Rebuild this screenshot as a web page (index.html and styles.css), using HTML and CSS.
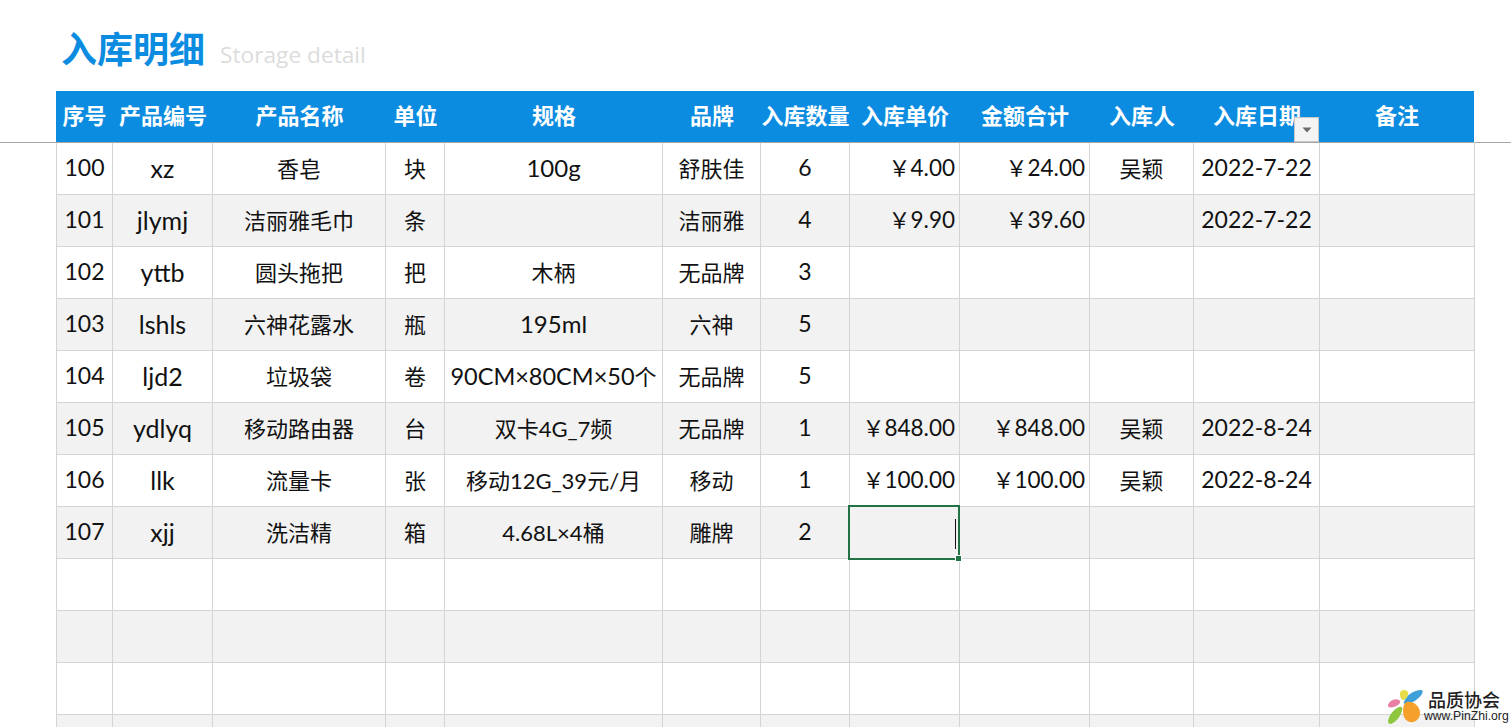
FILE: index.html
```html
<!DOCTYPE html>
<html lang="zh-CN">
<head>
<meta charset="utf-8">
<title>入库明细</title>
<link rel="stylesheet" href="styles.css">
</head>
<body>
<div class="sheet">
  <header class="title-bar">
    <h1 class="title">入库明细</h1>
    <span class="subtitle">Storage detail</span>
  </header>
  <div class="rule"></div>
  <table class="grid">
    <colgroup>
      <col class="c1"><col class="c2"><col class="c3"><col class="c4"><col class="c5"><col class="c6"><col class="c7"><col class="c8"><col class="c9"><col class="c10"><col class="c11"><col class="c12">
    </colgroup>
    <thead>
      <tr>
        <th>序号</th><th>产品编号</th><th>产品名称</th><th>单位</th><th>规格</th><th>品牌</th><th>入库数量</th><th>入库单价</th><th>金额合计</th><th>入库人</th>
        <th class="filter-cell">入库日期<span class="filter-btn"><svg width="10" height="6" viewBox="0 0 10 6"><path d="M0.5 0.5h9L5 5.5z" fill="#6b6b6b"/></svg></span></th>
        <th>备注</th>
      </tr>
    </thead>
    <tbody>
      <tr><td class="lat">100</td><td class="code">xz</td><td>香皂</td><td>块</td><td class="mix">100g</td><td>舒肤佳</td><td class="lat">6</td><td class="lat num"><span class="yen">￥</span>4.00</td><td class="lat num"><span class="yen">￥</span>24.00</td><td>吴颖</td><td class="lat">2022-7-22</td><td></td></tr>
      <tr><td class="lat">101</td><td class="code">jlymj</td><td>洁丽雅毛巾</td><td>条</td><td></td><td>洁丽雅</td><td class="lat">4</td><td class="lat num"><span class="yen">￥</span>9.90</td><td class="lat num"><span class="yen">￥</span>39.60</td><td></td><td class="lat">2022-7-22</td><td></td></tr>
      <tr><td class="lat">102</td><td class="code">yttb</td><td>圆头拖把</td><td>把</td><td>木柄</td><td>无品牌</td><td class="lat">3</td><td></td><td></td><td></td><td></td><td></td></tr>
      <tr><td class="lat">103</td><td class="code">lshls</td><td>六神花露水</td><td>瓶</td><td class="mix">195ml</td><td>六神</td><td class="lat">5</td><td></td><td></td><td></td><td></td><td></td></tr>
      <tr><td class="lat">104</td><td class="code">ljd2</td><td>垃圾袋</td><td>卷</td><td><span class="wide">90CM×80CM×50</span>个</td><td>无品牌</td><td class="lat">5</td><td></td><td></td><td></td><td></td><td></td></tr>
      <tr><td class="lat">105</td><td class="code">ydlyq</td><td>移动路由器</td><td>台</td><td>双卡4G_7频</td><td>无品牌</td><td class="lat">1</td><td class="lat num"><span class="yen">￥</span>848.00</td><td class="lat num"><span class="yen">￥</span>848.00</td><td>吴颖</td><td class="lat">2022-8-24</td><td></td></tr>
      <tr><td class="lat">106</td><td class="code">llk</td><td>流量卡</td><td>张</td><td>移动12G_39元/月</td><td>移动</td><td class="lat">1</td><td class="lat num"><span class="yen">￥</span>100.00</td><td class="lat num"><span class="yen">￥</span>100.00</td><td>吴颖</td><td class="lat">2022-8-24</td><td></td></tr>
      <tr><td class="lat">107</td><td class="code">xjj</td><td>洗洁精</td><td>箱</td><td>4.68L×4桶</td><td>雕牌</td><td class="lat">2</td><td class="selected"><span class="caret"></span><span class="handle"></span></td><td></td><td></td><td></td><td></td></tr>
      <tr><td></td><td></td><td></td><td></td><td></td><td></td><td></td><td></td><td></td><td></td><td></td><td></td></tr>
      <tr><td></td><td></td><td></td><td></td><td></td><td></td><td></td><td></td><td></td><td></td><td></td><td></td></tr>
      <tr><td></td><td></td><td></td><td></td><td></td><td></td><td></td><td></td><td></td><td></td><td></td><td></td></tr>
      <tr><td></td><td></td><td></td><td></td><td></td><td></td><td></td><td></td><td></td><td></td><td></td><td></td></tr>
    </tbody>
  </table>
  <aside class="watermark">
    <svg class="logo" width="38" height="36" viewBox="0 0 38 36">
      <path d="M18 13C20 6 28 1 35 1C37 1 37 3 36 5C32 11 25 15 20 15C18 15 17 14 18 13z" fill="#3f9fd8"/>
      <path d="M15 2C17 0 21 1 22 3C23 6 20 11 17 11C14 10 13 4 15 2z" fill="#e8dc4a"/>
      <path d="M2 16C4 11 9 9 13 11C15 12 14 15 12 16C9 18 5 19 3 18C2 18 2 17 2 16z" fill="#e77fa5"/>
      <path d="M13 18C16 17 17 19 16 22C14 28 10 33 5 35C3 35 2 34 2 32C3 26 8 20 13 18z" fill="#8ec63f"/>
      <path d="M21 13C27 12 34 17 34 24C34 30 29 34 24 33C19 32 17 27 17 22C17 18 18 14 21 13z" fill="#f6a02c"/>
    </svg>
    <div class="wm-text">
      <div class="wm-name">品质协会</div>
      <div class="wm-url">www.PinZhi.org</div>
    </div>
  </aside>
</div>
</body>
</html>
```
FILE: styles.css
```css
html, body {
  margin: 0;
  padding: 0;
  height: 727px;
  overflow: hidden;
  background: #fff;
}
.sheet {
  position: relative;
  height: 727px;
  overflow: hidden;
  font-family: "Lato", "Noto Sans CJK SC", sans-serif;
  color: #111;
}
.title-bar {
  height: 91px;
  box-sizing: border-box;
  padding: 22px 0 0 61px;
  display: flex;
  align-items: baseline;
  gap: 15px;
}
.title {
  margin: 0;
  font-size: 36px;
  line-height: 50px;
  font-weight: 700;
  color: #0c8ce0;
  font-family: "Noto Sans CJK SC", sans-serif;
}
.subtitle {
  font-family: "Open Sans", "Noto Sans", sans-serif;
  font-size: 22.7px;
  color: #dcdcdc;
}
.rule {
  position: absolute;
  left: 0;
  right: 0;
  top: 142px;
  height: 1px;
  background: #a6a6a6;
}
.grid {
  position: relative;
  margin-left: 56px;
  width: 1419px;
  table-layout: fixed;
  border-collapse: separate;
  border-spacing: 0;
  font-size: 22px;
}
.c1 { width: 57px; }
.c2 { width: 100px; }
.c3 { width: 173px; }
.c4 { width: 59px; }
.c5 { width: 218px; }
.c6 { width: 98px; }
.c7 { width: 89px; }
.c8 { width: 110px; }
.c9 { width: 130px; }
.c10 { width: 104px; }
.c11 { width: 126px; }
.c12 { width: 155px; }
.grid th {
  box-sizing: border-box;
  height: 52px;
  padding: 0 0 5px;
  background: #0c8ce0;
  color: #fff;
  font-weight: 700;
  font-family: "Noto Sans CJK SC", sans-serif;
  border-bottom: 1px solid #a6a6a6;
  white-space: nowrap;
}
.grid th:last-child {
  background-clip: padding-box;
  border-right: 1px solid #fff;
}
.grid td {
  box-sizing: border-box;
  height: 52px;
  padding: 0 0 4px;
  text-align: center;
  white-space: nowrap;
  border-right: 1px solid #d4d4d4;
  border-bottom: 1px solid #d4d4d4;
}
.grid td:first-child {
  border-left: 1px solid #d4d4d4;
}
.grid tbody tr:nth-child(even) td {
  background: #f2f2f2;
}
.grid td.lat {
  font-size: 23px;
  padding-bottom: 4px;
}
.grid td.mix {
  font-size: 24px;
  padding-bottom: 2px;
}
.grid td.code {
  font-size: 25px;
  padding-bottom: 2px;
}
.grid td.num {
  text-align: right;
  font-size: 22.5px;
  padding-right: 4px;
  padding-bottom: 6px;
}
.yen {
  font-size: 22px;
  font-family: "Noto Sans CJK SC", sans-serif;
}
.wide {
  font-size: 23.5px;
}
.filter-cell {
  position: relative;
}
.filter-btn {
  position: absolute;
  right: 1px;
  bottom: 0;
  width: 23px;
  height: 23px;
  background: #f4f4f4;
  border: 1px solid #c8c8c8;
  display: flex;
  align-items: center;
  justify-content: center;
}
.grid td.selected {
  position: relative;
}
.grid td.selected::after {
  content: "";
  position: absolute;
  left: -2px;
  top: -2px;
  right: -1px;
  bottom: -2px;
  border: 2px solid #217346;
}
.caret {
  position: absolute;
  right: 3px;
  top: 12px;
  width: 1px;
  height: 30px;
  background: #111;
}
.handle {
  position: absolute;
  z-index: 1;
  right: -3px;
  bottom: -4px;
  width: 5px;
  height: 5px;
  background: #217346;
  border: 1px solid #fff;
}
.watermark {
  position: absolute;
  left: 1386px;
  top: 689px;
  display: flex;
}
.logo {
  display: block;
}
.wm-text {
  display: flex;
  flex-direction: column;
  align-items: flex-start;
}
.wm-name {
  margin-left: 4px;
  font-family: "Noto Sans CJK SC", sans-serif;
  font-size: 18px;
  line-height: 21px;
  font-weight: 500;
  color: #222;
}
.wm-url {
  font-family: "Liberation Sans", sans-serif;
  font-size: 12.2px;
  line-height: 13px;
  color: #222;
}
```
